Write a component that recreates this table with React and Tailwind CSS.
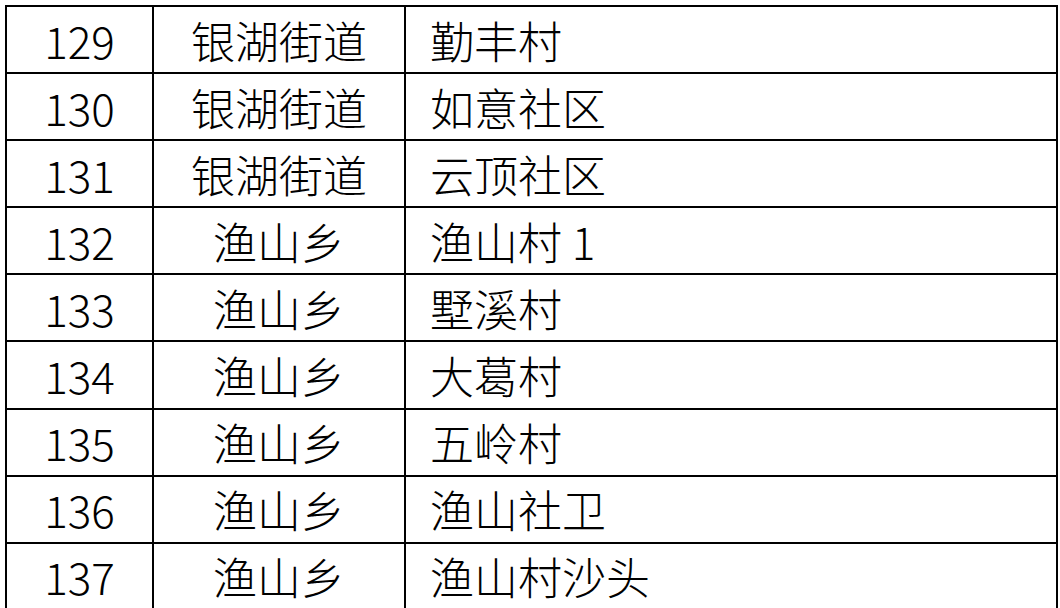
import React from 'react'

const rows = [
  ['129', '银湖街道', '勤丰村'],
  ['130', '银湖街道', '如意社区'],
  ['131', '银湖街道', '云顶社区'],
  ['132', '渔山乡', '渔山村 1'],
  ['133', '渔山乡', '墅溪村'],
  ['134', '渔山乡', '大葛村'],
  ['135', '渔山乡', '五岭村'],
  ['136', '渔山乡', '渔山社卫'],
  ['137', '渔山乡', '渔山村沙头'],
]

export default function App() {
  return (
    <div
      className="w-[1060px] h-[608px] overflow-hidden bg-white pl-[5px] pt-[5px] text-black font-light"
      style={{ fontFamily: '"Noto Sans CJK SC", "Noto Sans", sans-serif' }}
    >
      <div className="flex flex-col w-[1053px]">
        {rows.map(([no, town, village]) => (
          <div key={no} className="flex h-[67.1px] shrink-0 border-t-2 border-black text-[44px] leading-none">
            <div className="w-[147px] shrink-0 border-l-2 border-black flex items-center justify-center">
              {no}
            </div>
            <div className="w-[252px] shrink-0 border-l-2 border-black flex items-center justify-center">
              {town}
            </div>
            <div className="flex-1 border-l-2 border-r-2 border-black flex items-center pl-[24px]">
              {village}
            </div>
          </div>
        ))}
      </div>
    </div>
  )
}
